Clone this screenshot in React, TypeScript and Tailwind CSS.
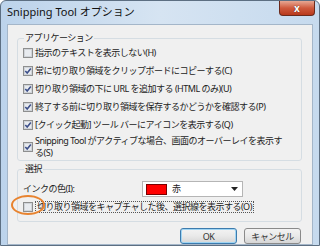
import React from 'react';

const font = { fontFamily: '"Noto Sans", "Noto Sans CJK JP", sans-serif' };

const CheckBox = ({ checked }: { checked: boolean }) => (
  <svg width="10" height="10" viewBox="0 0 10 10" className="shrink-0">
    <rect x="0.5" y="0.5" width="9" height="9" fill="#f4f4f4" stroke="#8e8f8f" />
    <rect x="1.5" y="1.5" width="7" height="7" fill="#e8ebef" stroke="#d0d4d9" />
    {checked && (
      <path d="M2.3 5 L4.2 7 L7.8 2.6" fill="none" stroke="#3d4f8a" strokeWidth="1.6" />
    )}
  </svg>
);

const Row = ({ checked, children, className = '' }: { checked: boolean; children: React.ReactNode; className?: string }) => (
  <div className={`flex items-center gap-[2px] h-[18px] ${className}`}>
    <CheckBox checked={checked} />
    <span className="whitespace-nowrap">{children}</span>
  </div>
);

const Btn = ({ label, primary }: { label: string; primary?: boolean }) => (
  <button
    className={`w-[57px] h-[16px] rounded-[3px] border text-[9px] leading-none text-[#333] flex items-center justify-center bg-gradient-to-b from-[#f3f3f3] via-[#e9e9e9] to-[#d6d6d6] ${
      primary ? 'border-[#3d7bad] shadow-[inset_0_0_0_1px_#9fd5f4]' : 'border-[#8a8a8a]'
    }`}
  >
    {label}
  </button>
);

export default function App() {
  return (
    <div
      style={font}
      className="w-[320px] h-[246px] flex flex-col bg-gradient-to-r from-[#bcd3eb] via-[#d6e4f2] to-[#c6daee] border border-[#5d6f82] rounded-t-[6px] overflow-hidden"
    >
      {/* title bar */}
      <div className="h-[23px] flex items-start shrink-0">
        <span className="ml-[6px] mt-[4px] text-[11px] leading-[14px] text-[#111]">Snipping Tool オプション</span>
        <div className="ml-auto mr-[4px] w-[36px] h-[15px] rounded-b-[4px] border border-t-0 border-[#6b2a1c] bg-gradient-to-b from-[#e6a793] via-[#cf5a3d] to-[#b8391c] flex items-center justify-center">
          <span className="text-white text-[10px] font-bold leading-none [text-shadow:0_0_1px_#3a1008]">x</span>
        </div>
      </div>

      {/* client area */}
      <div className="flex-1 mx-[6px] mb-[6px] bg-[#f0f0f0] border border-[#a4b6c9] text-[9px] tracking-[-0.5px] text-[#222] flex flex-col">
        <fieldset className="ml-[9px] mr-[10px] mt-[7px] border border-[#d5dde3] rounded-[3px] px-[5px] pb-[1px]">
          <legend className="ml-[1px] px-[1px] leading-[12px]">アプリケーション</legend>
          <Row checked={false}>指示のテキストを表示しない(H)</Row>
          <Row checked>常に切り取り領域をクリップボードにコピーする(C)</Row>
          <Row checked>切り取り領域の下に URL を追加する (HTML のみ)(U)</Row>
          <Row checked>終了する前に切り取り領域を保存するかどうかを確認する(P)</Row>
          <Row checked className="h-[15px]">[クイック起動] ツール バーにアイコンを表示する(Q)</Row>
          <div className="flex items-center gap-[2px] h-[25px]">
            <CheckBox checked />
            <div className="whitespace-nowrap">
              <div className="leading-[12px]">Snipping Tool がアクティブな場合、画面のオーバーレイを表示す</div>
              <div className="leading-[12px]">る(S)</div>
            </div>
          </div>
        </fieldset>

        <fieldset className="ml-[9px] mr-[10px] mt-[2px] border border-[#d5dde3] rounded-[3px] px-[5px] pt-[6px] pb-[6px]">
          <legend className="ml-[1px] px-[1px] leading-[12px]">選択</legend>
          <div className="flex items-center h-[16px]">
            <span className="w-[119px] whitespace-nowrap">インクの色(I):</span>
            <div className="w-[101px] h-[16px] bg-white border border-[#b5b5b5] flex items-center pl-[3px] pr-[4px]">
              <div className="w-[21px] h-[11px] bg-[#ff0000] border border-[#7a0000]" />
              <span className="ml-[5px]">赤</span>
              <svg width="7" height="4" viewBox="0 0 7 4" className="ml-auto">
                <path d="M0 0 H7 L3.5 4 Z" fill="#222" />
              </svg>
            </div>
          </div>
          <div className="relative flex items-center gap-[2px] h-[16px] mt-[2px]">
            <CheckBox checked={false} />
            <span className="whitespace-nowrap border border-dotted border-[#555] px-[1px] leading-[10px]">
              切り取り領域をキャプチャした後、選択線を表示する(O)
            </span>
            <div className="absolute left-[-12px] top-[-4px] w-[34px] h-[20px] rounded-[50%] border-2 border-[#e8832f]" />
          </div>
        </fieldset>

        <div className="flex justify-end gap-[7px] mt-[6px] mr-[11px]">
          <Btn label="OK" primary />
          <Btn label="キャンセル" />
        </div>
      </div>
    </div>
  );
}
